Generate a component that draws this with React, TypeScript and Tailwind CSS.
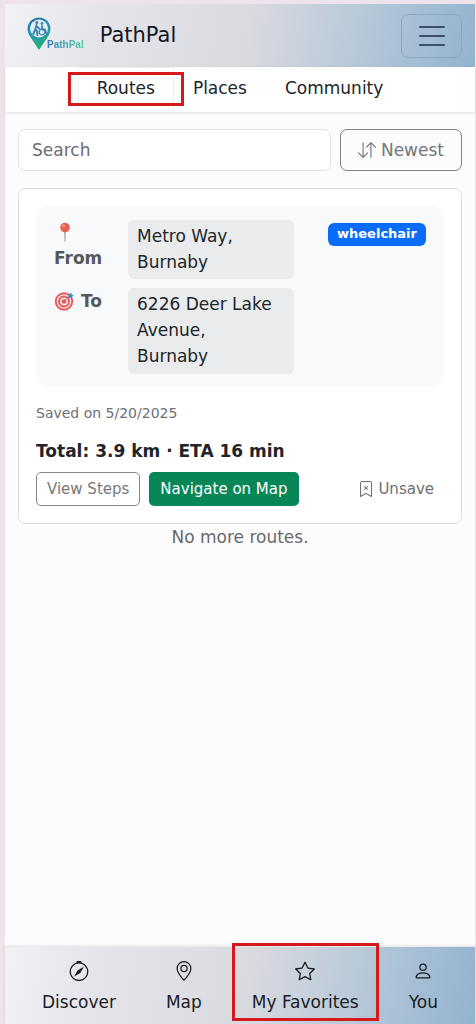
import type { ReactNode } from "react";
import {
  BsArrowDownUp,
  BsBookmarkX,
  BsCompass,
  BsGeoAlt,
  BsPerson,
  BsStar,
} from "react-icons/bs";

const barGradient =
  "bg-[linear-gradient(100deg,#f0f2f5_0%,#e4e4ea_20%,#d9d9e0_52%,#b8c9d8_74%,#a3bdd4_88%,#94b3cf_100%)]";

function LogoPin() {
  return (
    <svg viewBox="0 0 24 34" className="h-[34px] w-6 shrink-0" aria-hidden="true">
      <defs>
        <linearGradient id="pin" x1="0" y1="0" x2="0.3" y2="1">
          <stop offset="0" stopColor="#2e74ad" />
          <stop offset="0.5" stopColor="#2a8fb0" />
          <stop offset="1" stopColor="#20b573" />
        </linearGradient>
      </defs>
      <path
        d="M12 0.5C5.6 0.5 0.5 5.5 0.5 11.8c0 3.8 1.8 6.700 4.200 10.200L12 33l7.300-11c2.400-3.500 4.200-6.400 4.200-10.200C23.500 5.500 18.400 0.500 12 0.500z"
        fill="url(#pin)"
      />
      <circle cx="12" cy="11.500" r="9" fill="#e4f0f6" />
      <g fill="none" stroke="#3a85b5" strokeLinecap="round" strokeLinejoin="round">
        <path d="M9.500 8L8.300 12l2 2.500v3.500M8.300 12.500L6.300 17M9.500 9l2.500 2.500" strokeWidth="2" />
        <path d="M15 9v3.500h3l1 3.500" strokeWidth="1.800" />
        <circle cx="15" cy="15" r="2.800" strokeWidth="1.200" />
      </g>
      <circle cx="9.800" cy="5.500" r="1.600" fill="#3a85b5" />
      <circle cx="15" cy="6.500" r="1.400" fill="#3a85b5" />
    </svg>
  );
}

function Pushpin() {
  return (
    <svg viewBox="0 0 20 20" className="ml-px block h-[20px] w-[20px]" aria-hidden="true">
      <path d="M9.300 8h1.400l-.3 11.500h-.8z" fill="#8b9499" />
      <circle cx="10" cy="5.500" r="4.800" fill="#e8604f" />
      <ellipse cx="8.400" cy="3.700" rx="1.600" ry="1.200" fill="#f49a8c" />
    </svg>
  );
}

function Target() {
  return (
    <svg viewBox="0 0 20 20" className="h-[20px] w-[20px] shrink-0" aria-hidden="true">
      <circle cx="10" cy="10.500" r="9.200" fill="#e8565a" />
      <circle cx="10" cy="10.500" r="7.300" fill="#f6e4e5" />
      <circle cx="10" cy="10.500" r="5.900" fill="#e8565a" />
      <circle cx="10" cy="10.500" r="4" fill="#f6e4e5" />
      <circle cx="10" cy="10.500" r="2.300" fill="#e8565a" />
      <path d="M10 10.500L16 5" stroke="#7d6f73" strokeWidth="1" />
      <path d="M14 6.800l.4-2.800L17 1.500l.7 2 2 .8-2.500 2.500z" fill="#3a8fc0" />
    </svg>
  );
}

function Tab({ label, active = false }: { label: string; active?: boolean }) {
  return (
    <button
      type="button"
      className={
        active
          ? "relative border-x border-t border-[#f0f0f2] px-[18px] pt-[7px] pb-[11px]"
          : "px-[19px] pt-2 pb-[11px]"
      }
    >
      {label}
      {active && (
        <span className="pointer-events-none absolute -inset-x-[11px] top-1 bottom-[6px] border-3 border-[#d61a1c]" />
      )}
    </button>
  );
}

function NavItem({
  label,
  icon,
  active = false,
}: {
  label: string;
  icon: ReactNode;
  active?: boolean;
}) {
  return (
    <a href="#" className="relative flex flex-col items-center gap-2 pt-[14px] pb-[9px] leading-[26px]">
      {icon}
      <span>{label}</span>
      {active && (
        <span className="pointer-events-none absolute -inset-x-5 -top-1 bottom-[3px] border-3 border-[#d61a1c]" />
      )}
    </a>
  );
}

export default function App() {
  return (
    <div className="flex min-h-screen flex-col bg-[#eee3ea] pt-1 pr-px pl-[5px] font-['DejaVu_Sans',sans-serif] text-[17px] leading-[26px] text-[#212529]">
      <header className={`flex h-[63px] items-center justify-between pr-[13px] pl-[22px] ${barGradient}`}>
        <a href="#" className="flex items-center pb-1 text-[#15171c]">
          <LogoPin />
          <span className="-ml-1 self-end bg-linear-to-r from-[#3478b5] to-[#50cfa0] bg-clip-text font-['Liberation_Sans',sans-serif] text-[10px] leading-3 font-bold text-transparent">
            PathPal
          </span>
          <span className="ml-4 pt-[3px] text-[21px]">PathPal</span>
        </a>
        <button
          type="button"
          aria-label="Menu"
          className="flex h-[44px] w-[61px] flex-col items-center justify-center gap-[7px] rounded-[7px] border border-[#8ba8bf]"
        >
          <span className="h-[2px] w-[26px] rounded-full bg-[#3e5169]" />
          <span className="h-[2px] w-[26px] rounded-full bg-[#3e5169]" />
          <span className="h-[2px] w-[26px] rounded-full bg-[#3e5169]" />
        </button>
      </header>

      <nav className="z-10 flex justify-center bg-white text-[#212529] shadow-[0_1px_3px_rgba(0,0,0,0.12)]">
        <Tab label="Routes" active />
        <Tab label="Places" />
        <Tab label="Community" />
      </nav>

      <main className="flex-1 bg-[#fcfcfd] px-[13px] pt-[17px]">
        <div className="flex gap-[9px]">
          <input
            type="search"
            aria-label="Search"
            placeholder="Search"
            className="h-[42px] min-w-0 flex-1 rounded-[7px] border border-[#e0e3e7] bg-white px-[13px] outline-none placeholder:text-[#6b6d70]"
          />
          <button
            type="button"
            className="flex h-[42px] items-center gap-[5px] rounded-[7px] border border-[#808285] px-[17px] text-[#747679]"
          >
            <BsArrowDownUp className="size-[18px]" />
            Newest
          </button>
        </div>

        <article className="mt-[17px] rounded-[7px] border border-[#dadce0] bg-white p-[17px]">
          <div className="flex items-start justify-between rounded-[14px] bg-[#f8f9fb] px-[18px] pt-[14px] pb-[13px]">
            <dl className="grid grid-cols-[65px_166px] gap-x-[9px] gap-y-[9px]">
              <dt className="pt-[2px] font-bold text-[#55595d]">
                <Pushpin />
                <span className="mt-[3px] block">From</span>
              </dt>
              <dd className="rounded-[6px] bg-[#e9ebed] pt-[3px] pr-[15px] pb-1 pl-[9px]">
                Metro Way, Burnaby
              </dd>
              <dt className="flex items-center gap-[7px] self-start font-bold text-[#55595d]">
                <Target />
                To
              </dt>
              <dd className="rounded-[6px] bg-[#e9ebed] pt-[3px] pr-[15px] pb-[5px] pl-[9px]">
                6226 Deer Lake Avenue, Burnaby
              </dd>
            </dl>
            <span className="mt-[3px] rounded-[6px] bg-[#0a6cfa] px-[9px] pt-[3px] pb-1 text-[13px] leading-4 font-bold text-white">
              wheelchair
            </span>
          </div>
          <p className="mt-4 text-[14px] leading-5 text-[#6c7075]">Saved on 5/20/2025</p>
          <p className="mt-[15px] text-[17px] leading-[26px] font-bold">Total: 3.9 km · ETA 16 min</p>
          <div className="mt-2 flex items-center gap-[9px] text-[15px] leading-[22px]">
            <button type="button" className="h-[34px] rounded-[5px] border border-[#858789] px-[10px] text-[#77797c]">
              View Steps
            </button>
            <button type="button" className="h-[34px] rounded-[5px] bg-[#078758] px-[11px] text-white">
              Navigate on Map
            </button>
            <button type="button" className="ml-auto flex h-[34px] items-center gap-1 px-[10px] text-[#6c7075]">
              <BsBookmarkX className="size-4" />
              Unsave
            </button>
          </div>
        </article>
        <p className="text-center text-[#66696d]">No more routes.</p>
      </main>

      <footer className={`${barGradient} shadow-[0_-1px_3px_rgba(0,0,0,0.12)]`}>
        <nav className="flex justify-between px-[37px] text-[#1a1d24]">
          <NavItem label="Discover" icon={<BsCompass className="size-5" />} />
          <NavItem label="Map" icon={<BsGeoAlt className="size-5" />} />
          <NavItem label="My Favorites" icon={<BsStar className="size-5" />} active />
          <NavItem label="You" icon={<BsPerson className="size-5" />} />
        </nav>
      </footer>
    </div>
  );
}
